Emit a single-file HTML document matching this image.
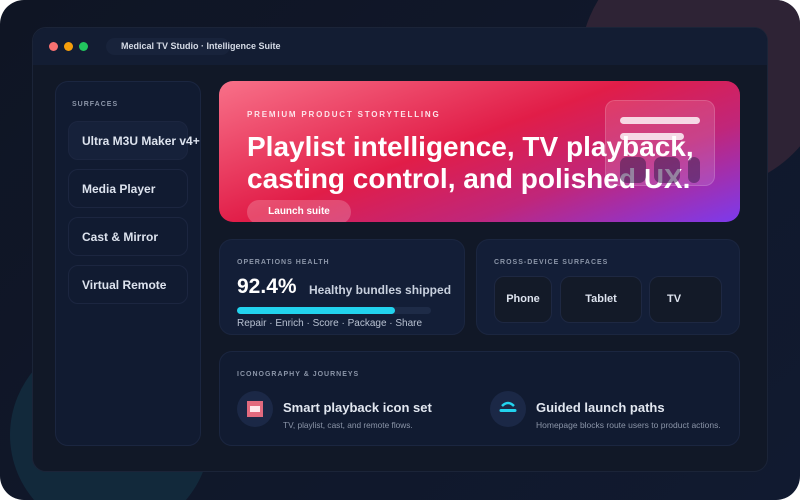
<!DOCTYPE html>
<html><head><style>
*{margin:0;padding:0;box-sizing:border-box}
html,body{width:800px;height:500px;background:#fff;overflow:hidden;font-family:"Liberation Sans",sans-serif}
.root{position:absolute;left:0;top:0;width:800px;height:500px;border-radius:24px;background:linear-gradient(135deg,#0f1524,#111a30);overflow:hidden}
.c1{position:absolute;left:580px;top:-60px;width:250px;height:250px;border-radius:50%;background:#2e2335}
.c2{position:absolute;left:10px;top:335px;width:200px;height:200px;border-radius:50%;background:#12293b}
.win{position:absolute;left:32px;top:27px;width:736px;height:445px;border-radius:14px;background:#111827;border:1px solid #1b2438;overflow:hidden}
.tb{position:absolute;left:0;top:0;width:736px;height:37px;background:#131d33}
.dot{position:absolute;top:14px;width:9px;height:9px;border-radius:50%}
.pill{position:absolute;left:73px;top:10px;width:124px;height:17px;border-radius:9px;background:#18233b}
.ttl{position:absolute;left:88px;top:13px;font-size:9px;font-weight:bold;color:#d5dbe6;white-space:nowrap}
.card{position:absolute;border-radius:13px;background:#111b31;border:1px solid #1b2640}
.lbl{position:absolute;font-size:7px;letter-spacing:1px;color:#8b95a8;font-weight:bold;white-space:nowrap}
.side{left:22px;top:53px;width:146px;height:365px}
.it{position:absolute;left:12px;width:120px;height:39px;border-radius:10px;border:1px solid #1c2640;background:#111b31;color:#dde3ee;font-weight:bold;font-size:12px;padding:12px 0 0 13px;white-space:nowrap}
.hero{position:absolute;left:186px;top:53px;width:521px;height:141px;border-radius:14px;background:linear-gradient(160deg,#f87189 0%,#e11d48 45%,#c0267a 70%,#7c3aed 100%);overflow:hidden}
.dev{position:absolute;border-radius:10px;background:#131a28;border:1px solid #1e2842;color:#dde3ee;font-weight:bold;font-size:11px;text-align:center;padding-top:16px}
.ic{position:absolute;width:36px;height:36px;border-radius:50%;background:#1b2846}
</style></head><body>
<div class="root">
<div class="c1"></div><div class="c2"></div>
<div class="win">
 <div class="tb">
  <div class="dot" style="left:16px;background:#f87171"></div>
  <div class="dot" style="left:31px;background:#f59e0b"></div>
  <div class="dot" style="left:46px;background:#22c55e"></div>
  <div class="pill"></div>
  <div class="ttl">Medical TV Studio · Intelligence Suite</div>
 </div>
 <div class="card side">
  <div class="lbl" style="left:16px;top:19px">SURFACES</div>
  <div class="it" style="top:39px;background:#16213a">Ultra M3U Maker v4+</div>
  <div class="it" style="top:87px">Media Player</div>
  <div class="it" style="top:135px">Cast &amp; Mirror</div>
  <div class="it" style="top:183px">Virtual Remote</div>
 </div>
 <div class="hero">
  <div style="position:absolute;left:28px;top:29px;font-size:8px;letter-spacing:1.8px;color:#fde4ea;font-weight:bold">PREMIUM PRODUCT STORYTELLING</div>
  <div style="position:absolute;left:28px;top:50px;font-size:28px;line-height:32px;font-weight:bold;color:#fff;white-space:nowrap;width:520px">Playlist intelligence, TV playback,<br>casting control, and polished UX.</div>
  <div style="position:absolute;left:28px;top:119px;width:104px;height:24px;border-radius:12px;background:rgba(255,255,255,0.2);color:#fff;font-size:10px;font-weight:bold;text-align:center;padding-top:6px">Launch suite</div>
  <div style="position:absolute;left:386px;top:19px;width:110px;height:86px;border-radius:10px;background:rgba(255,255,255,0.13);border:1px solid rgba(255,255,255,0.15)">
   <div style="position:absolute;left:14px;top:16px;width:80px;height:7px;border-radius:4px;background:rgba(255,255,255,0.8)"></div>
   <div style="position:absolute;left:14px;top:32px;width:64px;height:7px;border-radius:4px;background:rgba(255,255,255,0.8)"></div>
   <div style="position:absolute;left:14px;top:56px;width:26px;height:26px;border-radius:7px;background:rgba(60,30,80,0.55)"></div>
   <div style="position:absolute;left:48px;top:56px;width:26px;height:26px;border-radius:7px;background:rgba(60,30,80,0.55)"></div>
   <div style="position:absolute;left:82px;top:56px;width:12px;height:26px;border-radius:6px;background:rgba(60,30,80,0.55)"></div>
  </div>
 </div>
 <div class="card" style="left:186px;top:211px;width:246px;height:96px;background:#131e37">
  <div class="lbl" style="left:17px;top:19px">OPERATIONS HEALTH</div>
  <div style="position:absolute;left:17px;top:35px;font-size:21px;font-weight:bold;color:#fff">92.4%</div>
  <div style="position:absolute;left:89px;top:43px;font-size:12px;font-weight:bold;color:#c8d0de;white-space:nowrap">Healthy bundles shipped</div>
  <div style="position:absolute;left:17px;top:67px;width:194px;height:7px;border-radius:4px;background:#1e2b47"><div style="width:158px;height:7px;border-radius:4px;background:#22d3ee"></div></div>
  <div style="position:absolute;left:17px;top:78px;font-size:10px;color:#b8c1d1;white-space:nowrap">Repair · Enrich · Score · Package · Share</div>
 </div>
 <div class="card" style="left:443px;top:211px;width:264px;height:96px;background:#131e37">
  <div class="lbl" style="left:17px;top:19px">CROSS-DEVICE SURFACES</div>
  <div class="dev" style="left:17px;top:36px;width:58px;height:47px">Phone</div>
  <div class="dev" style="left:83px;top:36px;width:82px;height:47px">Tablet</div>
  <div class="dev" style="left:172px;top:36px;width:73px;height:47px;text-align:left;padding-left:17px">TV</div>
 </div>
 <div class="card" style="left:186px;top:323px;width:521px;height:95px">
  <div class="lbl" style="left:17px;top:19px">ICONOGRAPHY &amp; JOURNEYS</div>
  <div class="ic" style="left:17px;top:39px"><div style="position:absolute;left:10px;top:10px;width:16px;height:16px;background:#e26a7e"></div><div style="position:absolute;left:13px;top:15px;width:10px;height:6px;background:#fde8ec"></div></div>
  <div style="position:absolute;left:63px;top:48px;font-size:13px;font-weight:bold;color:#e2e7f0">Smart playback icon set</div>
  <div style="position:absolute;left:63px;top:68px;font-size:8.3px;color:#8b95a8;white-space:nowrap">TV, playlist, cast, and remote flows.</div>
  <div class="ic" style="left:270px;top:39px"><svg width="36" height="36"><path d="M12 15 Q18 9 24 15" stroke="#22d3ee" stroke-width="2.5" fill="none"/><rect x="9.5" y="18" width="17" height="3" rx="1.5" fill="#22d3ee"/></svg></div>
  <div style="position:absolute;left:316px;top:48px;font-size:13px;font-weight:bold;color:#e2e7f0">Guided launch paths</div>
  <div style="position:absolute;left:316px;top:68px;font-size:8.5px;color:#8b95a8;white-space:nowrap">Homepage blocks route users to product actions.</div>
 </div>
</div>
</div>
</body></html>
